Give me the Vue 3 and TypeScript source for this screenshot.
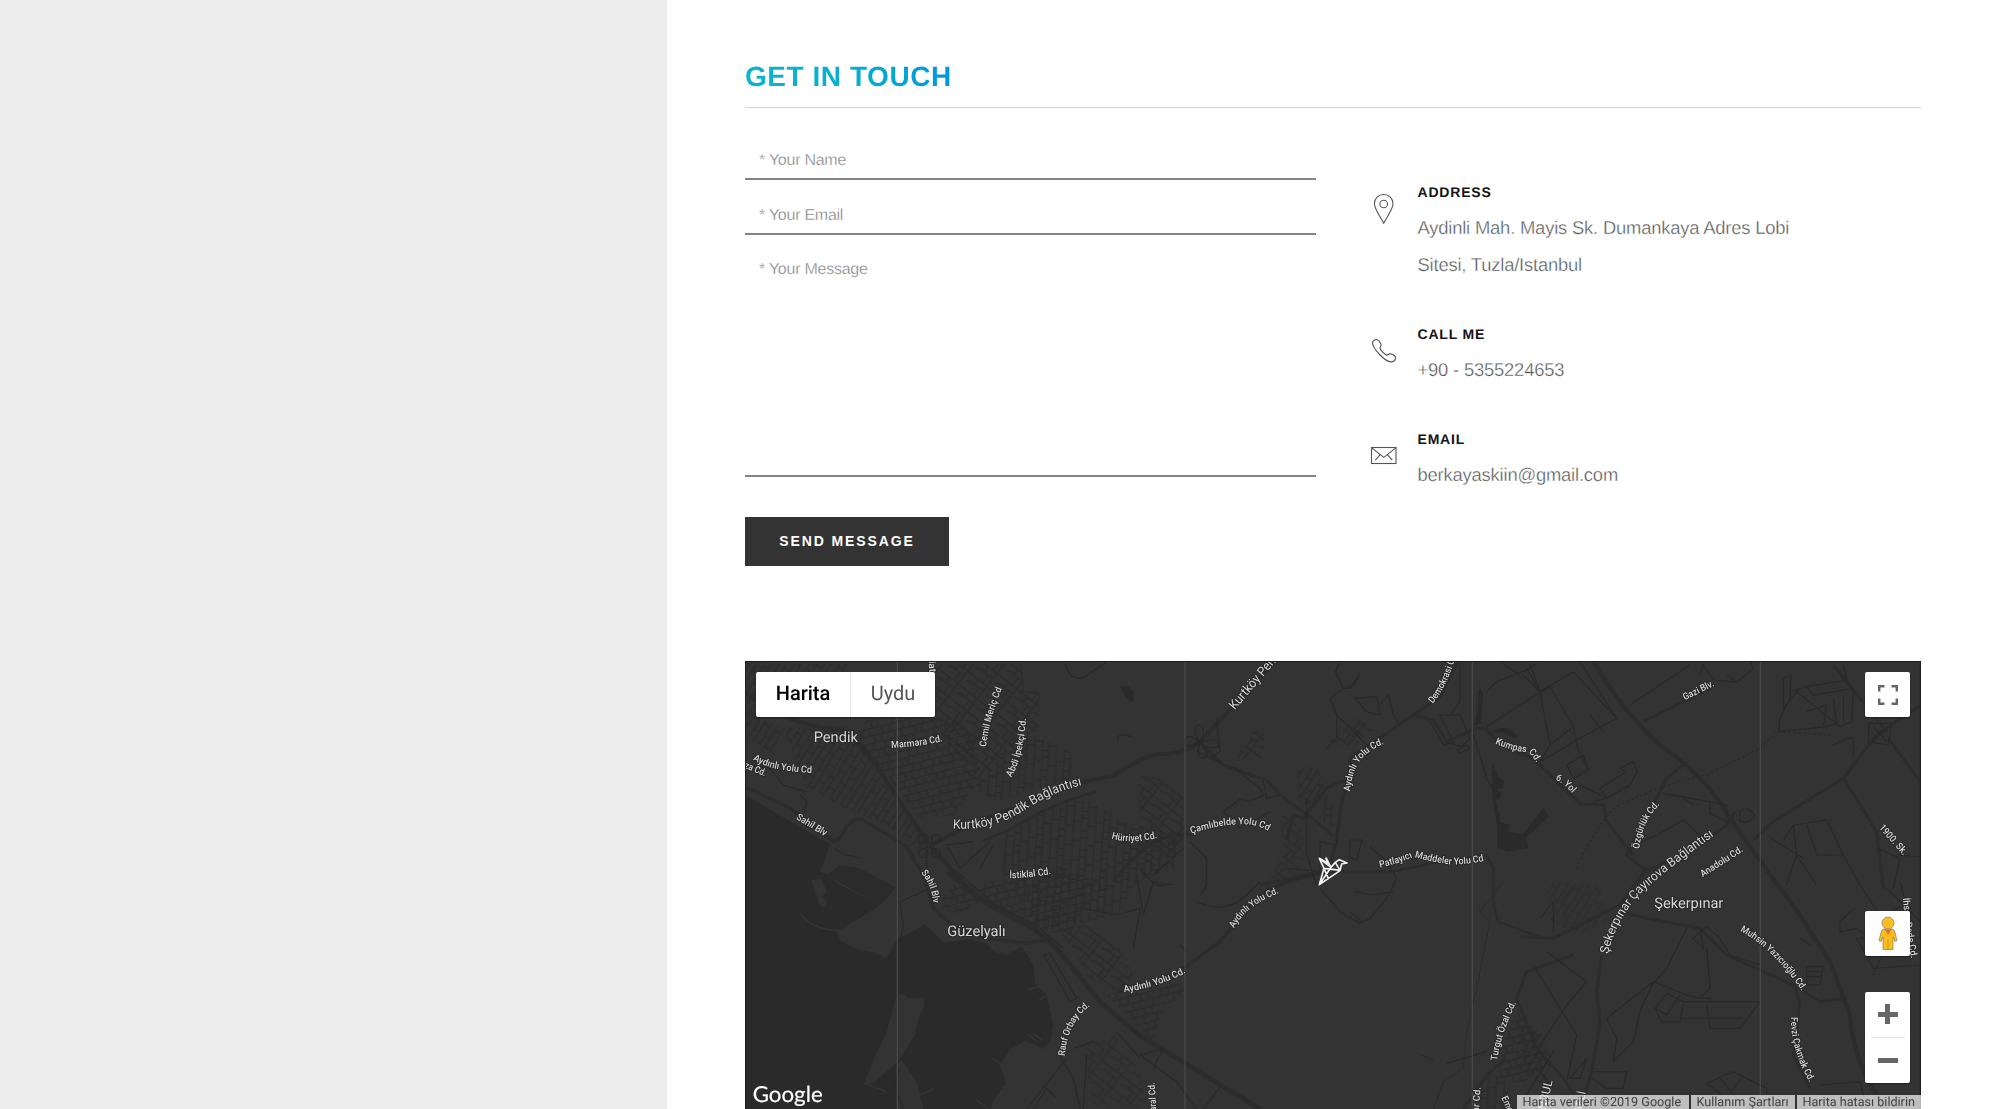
<script setup lang="ts">
interface Label {
  id: string
  text: string
  d: string
  size?: number
  length?: number
}

interface Contact {
  icon: 'pin' | 'phone' | 'mail'
  title: string
  lines: string[]
}

const contacts: Contact[] = [
  { icon: 'pin', title: 'ADDRESS', lines: ['Aydinli Mah. Mayis Sk. Dumankaya Adres Lobi', 'Sitesi, Tuzla/Istanbul'] },
  { icon: 'phone', title: 'CALL ME', lines: ['+90 - 5355224653'] },
  { icon: 'mail', title: 'EMAIL', lines: ['berkayaskiin@gmail.com'] },
]

// Vertical joins between the map tiles
const seams = [472, 1335, 2197, 3061]

// Street names that follow their roads
const labels: Label[] = [
  { id: 'lat', text: 'lat', d: 'M566 18 L569 64', length: 34 },
  { id: 'marmara', text: 'Marmara Cd.', d: 'M454 279 Q530 276 612 258', length: 156 },
  { id: 'cemil', text: 'Cemil Meriç Cd', d: 'M738 276 Q748 190 788 96', length: 182 },
  { id: 'abdi', text: 'Abdi İpekçi Cd.', d: 'M814 367 Q852 300 858 188', length: 184 },
  { id: 'aydinli1', text: 'Aydınlı Yolu Cd', d: 'M38 314 Q84 340 132 345 Q180 354 226 354', length: 184 },
  { id: 'za', text: 'za Cd.', d: 'M12 338 L84 368', length: 68 },
  { id: 'sahil1', text: 'Sahil Blv', d: 'M167 491 L258 546', length: 102 },
  { id: 'sahil2', text: 'Sahil Blv', d: 'M543 653 Q575 690 579 742', length: 100 },
  { id: 'kurtkoy1', text: 'Kurtköy Pendik Bağlantısı', d: 'M638 520 Q750 530 850 468 Q930 412 1036 388', size: 39, length: 416 },
  { id: 'hurriyet', text: 'Hürriyet Cd.', d: 'M1114 550 Q1170 568 1256 548', length: 140 },
  { id: 'istiklal', text: 'İstiklal Cd.', d: 'M809 670 Q860 670 938 656', length: 126 },
  { id: 'rauf', text: 'Rauf Orbay Cd.', d: 'M974 1203 Q984 1100 1050 1054', length: 174 },
  { id: 'kurtkoy2', text: 'Kurtköy Pendik', d: 'M1484 166 L1674 -58', size: 39, length: 240 },
  { id: 'demokrasi', text: 'Demokrasi Cd', d: 'M2078 146 Q2124 94 2154 -20', length: 162 },
  { id: 'kumpas', text: 'Kumpas Cd.', d: 'M2265 265 Q2320 290 2364 292 Q2378 298 2394 334', length: 144 },
  { id: 'aydinli2', text: 'Aydınlı Yolu Cd.', d: 'M1830 410 Q1838 335 1872 304 Q1900 278 1930 268', length: 188 },
  { id: 'camlibelde', text: 'Çamlıbelde Yolu Cd', d: 'M1354 536 Q1450 504 1520 508 Q1560 512 1588 530', length: 238 },
  { id: 'patlayici', text: 'Patlayıcı Maddeler Yolu Cd', d: 'M1920 638 Q1980 624 2020 606 Q2080 622 2130 628 Q2180 630 2242 616', length: 320 },
  { id: 'aydinli3', text: 'Aydınlı Yolu Cd.', d: 'M1482 820 Q1520 750 1618 714', length: 176 },
  { id: 'aydinli4', text: 'Aydınlı Yolu Cd.', d: 'M1152 1012 Q1250 998 1336 954', length: 196 },
  { id: 'maral', text: 'Maral Cd.', d: 'M1250 1390 L1244 1278', length: 108 },
  { id: 'turgut', text: 'Turgut Özal Cd.', d: 'M2272 1217 Q2278 1150 2330 1040', length: 184 },
  { id: 'arcd', text: 'lar Cd.', d: 'M2216 1380 L2222 1292', length: 84 },
  { id: 'em', text: 'Emek', d: 'M2284 1328 L2310 1388', length: 62 },
  { id: 'gazi', text: 'Gazi Blv.', d: 'M2834 136 L2928 90', length: 100 },
  { id: 'yol', text: '6. Yol', d: 'M2446 374 Q2470 384 2498 416', length: 66 },
  { id: 'ozgurluk', text: 'Özgürlük Cd.', d: 'M2698 582 Q2706 500 2758 450', length: 150 },
  { id: 'cayirova', text: 'Şekerpınar Çayırova Bağlantısı', d: 'M2604 898 Q2630 790 2706 710 Q2800 628 2928 538', size: 38, length: 490 },
  { id: 'anadolu', text: 'Anadolu Cd.', d: 'M2888 667 L3014 586', length: 146 },
  { id: 'sk1900', text: '1900. Sk.', d: 'M3416 518 L3494 606', length: 112 },
  { id: 'muhsin', text: 'Muhsin Yazıcıoğlu Cd.', d: 'M3000 828 Q3100 880 3188 1012', length: 262 },
  { id: 'fevzi', text: 'Fevzi Çakmak Cd.', d: 'M3153 1086 Q3150 1180 3212 1288', length: 206 },
  { id: 'ihsan', text: 'İhsan Dede Cd.', d: 'M3488 730 Q3496 820 3514 914', length: 182 },
  { id: 'bul', text: 'İSTANBUL', d: 'M2402 1440 L2438 1276', size: 36, length: 166 },
  { id: 'koc', text: 'KOCAELİ', d: 'M2510 1438 L2538 1310', size: 32, length: 130 },
]
</script>

<template>
  <div class="page">
    <aside class="side"></aside>
    <main class="main">
      <h2 class="heading"><span>GET IN TOUCH</span></h2>

      <section class="touch">
        <form class="form" @submit.prevent>
          <label class="field"><span>* Your Name</span></label>
          <label class="field second"><span>* Your Email</span></label>
          <label class="field area"><span>* Your Message</span></label>
          <button class="send" type="submit">SEND MESSAGE</button>
        </form>

        <ul class="contacts">
          <li v-for="c in contacts" :key="c.title">
            <svg class="icon" :class="c.icon" width="30" height="34" viewBox="0 0 30 34" fill="none" stroke="#555" stroke-width="1.1">
              <template v-if="c.icon === 'pin'">
                <path d="M14.7 33.2C12 27.5 5.4 19.6 5.4 13.6C5.4 8.2 9.5 4.5 14.7 4.5S24 8.2 24 13.6C24 19.6 17.400 27.500 14.700 33.200Z" />
                <circle cx="14.700" cy="14" r="3.800" />
              </template>
              <path
                v-else-if="c.icon === 'phone'"
                d="M5.200 7.300C6.600 6.200 8.500 6.300 9.900 7.900C11.400 9.800 12.700 11.300 11.900 12.900C10.900 14.300 10.700 15 11.500 16.400C12.700 18.600 15.200 20.800 17.700 22.300C19.300 21.200 20.800 20.500 22.500 21.100C24.500 21.700 26.500 23.500 26.500 25.100C26.400 27 24.600 28.500 22.500 28.900C19.500 29.200 14.500 25.600 10.600 21.500C6.500 17.200 3.600 13 3.500 10.100C3.500 8.900 4.200 8 5.200 7.300Z"
              />
              <template v-else>
                <rect x="2.500" y="8.500" width="24.500" height="16" />
                <path d="M2.500 8.600L14.800 18.400L27.100 8.600M11.200 15.600L6.400 21.200M18.400 15.600L23.200 21.200" />
              </template>
            </svg>
            <div>
              <h5>{{ c.title }}</h5>
              <p v-for="line in c.lines" :key="line">{{ line }}</p>
            </div>
          </li>
        </ul>
      </section>

      <section class="map">
        <svg class="canvas" viewBox="15 18 3528 1344" preserveAspectRatio="none">
          <defs>
            <pattern id="ga" width="62" height="44" patternUnits="userSpaceOnUse" patternTransform="rotate(-14)">
              <path d="M0 1H62M0 23H62M12 1V23M42 23V45M50 1V23M22 23V45" class="grid" />
            </pattern>
            <pattern id="gb" width="74" height="48" patternUnits="userSpaceOnUse" patternTransform="rotate(38)">
              <path d="M0 1H74M0 20H50M18 1V20M50 1V48M34 20V48M62 24H74" class="grid" />
            </pattern>
            <pattern id="gc" width="66" height="58" patternUnits="userSpaceOnUse" patternTransform="rotate(4)">
              <path d="M1 0V58M20 0V58M44 0V58M1 10H20M20 34H44M44 20H66M1 48H20" class="grid" />
            </pattern>
            <pattern id="gd" width="58" height="38" patternUnits="userSpaceOnUse" patternTransform="rotate(-58)">
              <path d="M0 1H58M0 18H58M10 1V18M38 18V38" class="grid" />
            </pattern>
          </defs>

          <rect x="15" y="18" width="3528" height="1344" fill="#333" />

          <!-- sea, lakes and quarries -->
          <g fill="#2a2a2a">
            <path d="M15 420L270 568L240 650L262 660L300 690L420 750L330 810L292 828L300 856L350 885L402 890L430 908L450 890L472 850L505 838L535 820L556 808L610 864L690 852L740 866L765 892L800 898L846 874L880 930L885 985L920 1020L940 1110L930 1160L910 1182L856 1156L812 1182L780 1230L798 1285L764 1330L750 1362H550L530 1280L480 1210L470 1160L400 1285L370 1290L412 1190L440 1120L470 1015H552L538 1100L520 1180L470 1230V1362H15Z" />
            <path d="M1140 92L1166 94L1182 110L1178 142L1160 130Z" />
            <path d="M2220 98L2230 118L2222 206L2202 212L2214 160L2212 112Z" />
            <path d="M2250 232Q2300 200 2334 246L2320 250L2290 232Z" />
            <path d="M2256 326L2280 372L2294 378L2286 400L2266 404L2284 410L2280 432L2266 434L2278 480L2280 502L2310 510L2304 530L2350 536L2410 460L2426 484L2358 550L2366 580L2300 590L2272 576L2272 520L2258 430Z" />
          </g>
          <path d="M240 650L262 658L300 632L360 640L470 700L420 750L330 700Z" fill="#2b2b2b" />
          <path d="M290 830L420 755L472 690V850L440 910L400 892L350 885L305 858Z" fill="#333" />
          <g fill="#333">
            <path d="M214 676L244 672L262 712L244 726L262 740L252 760L240 752L228 716Z" />
            <path d="M472 1015L496 1020L500 1028H552V1058L538 1080L525 1140L472 1222L390 1290L372 1288L398 1220L440 1130Z" />
            <path d="M472 1220L520 1270L545 1362H472Z" />
          </g>
          <path d="M182 776Q210 824 300 826" class="pier" />
          <path d="M280 580L312 598L362 610" class="thin" />
          <path d="M864 1004L904 992M896 1036L916 1024M862 1138L890 1158M880 1136L908 1156M754 1206L796 1240M706 1332L746 1362M372 1284L440 1310M540 1320L582 1300" class="pier" />

          <!-- built-up street grids -->
          <g opacity=".8">
            <path d="M20 26H330L328 52H50V186L130 220L100 300L20 240Z" fill="url(#gd)" />
            <path d="M590 30L840 24L852 90L900 120L900 200L860 290L700 380L585 190Z" fill="url(#gb)" />
            <path d="M370 190H640L720 250L700 400L640 480L540 492L470 400L350 280Z" fill="url(#ga)" />
            <path d="M130 220L330 210L390 310L470 440L560 540L540 590L440 510L340 470L200 400Z" fill="url(#gd)" />
            <path d="M840 220L990 290L1000 370L770 440L700 400Z" fill="url(#gc)" />
            <path d="M800 530L960 440L1050 440L1150 500L1320 540L1300 640L1180 690L1130 780L900 830L780 640Z" fill="url(#gc)" />
            <path d="M640 690L700 690L980 640L1110 700L1020 770L990 840L930 830L730 740L640 780L600 740Z" fill="url(#ga)" />
            <path d="M960 830L1040 810L1130 870L1180 960L1140 1010L1050 970Z" fill="url(#gb)" />
            <path d="M1200 350L1300 390L1330 430V560L1240 640L1200 640Z" fill="url(#gb)" />
            <path d="M1100 1020L1300 970L1340 1010L1270 1060L1240 1160L1200 1120Z" fill="url(#ga)" />
            <path d="M2300 1140L2340 1060L2390 1140L2420 1230L2340 1290L2270 1270Z" fill="url(#ga)" />
            <path d="M2240 1240L2310 1290L2300 1362H2200Z" fill="url(#gc)" />
            <path d="M2420 680L2580 690L2600 800L2520 835L2430 800Z" fill="url(#gd)" opacity=".6" />
            <path d="M1500 290L1545 225L1575 240L1570 310L1490 318Z" fill="url(#gb)" />
            <path d="M1670 340L1730 336L1754 380L1740 440L1680 450Z" fill="url(#gd)" />
            <path d="M1740 390L1785 460L1790 520L1740 500Z" fill="url(#gc)" />
            <path d="M1620 480L1680 500L1700 600L1640 690L1570 700L1630 600Z" fill="url(#gb)" opacity=".6" />
            <path d="M1750 270L1850 190L1906 220L1850 270Z" fill="url(#gb)" />
            <path d="M1020 1170L1120 1140L1200 1250L1220 1362L1060 1350Z" fill="url(#gb)" opacity=".7" />
            <path d="M2340 1080L2400 1130L2440 1220L2400 1290L2340 1240Z" fill="url(#gd)" />
          </g>

          <!-- motorways and avenues -->
          <g class="road">
            <path d="M15 112Q120 205 300 225Q370 260 440 380L570 572L720 740" stroke-width="12" />
            <path d="M15 395L150 460L280 560Q300 556 320 515Q345 485 370 495L500 575L550 660L580 760L640 815L740 850L860 865L940 850" stroke-width="10" />
            <path d="M570 572Q700 500 850 450Q1000 380 1120 362Q1200 310 1250 297Q1330 300 1380 260L1470 165L1600 25" stroke-width="12" />
            <path d="M620 650L740 745L880 820L950 880L1080 1040L1200 1142L1560 1362" stroke-width="14" />
            <path d="M650 650L760 745L890 812L970 880" stroke-width="5" />
            <path d="M730 556Q780 540 850 500Q930 450 1070 410" stroke-width="7" />
            <path d="M1120 680Q1240 520 1354 540M1380 262L1450 330L1580 376L1620 420L1730 500L1780 545" stroke-width="9" />
            <path d="M1640 555L1660 480L1690 490L1760 400L1800 380H1820L1800 470Q1790 590 1760 650L1640 680L1560 720L1440 860L1320 948L1200 1000L1130 1010" stroke-width="10" />
            <path d="M1820 410L1830 310L2020 180L2100 125L2156 15M2020 180L2080 196L2120 260L2210 220L2240 222L2280 270L2380 310L2440 370L2520 446L2590 450L2600 500L2640 550L2680 600" stroke-width="9" />
            <path d="M2240 215L2340 150L2430 95L2500 215L2515 285L2545 345" stroke-width="5" />
            <path d="M2560 20Q2640 160 2760 270Q2890 360 2950 460L3040 590L3180 780L3270 920L3330 1080Q3340 1230 3440 1362" stroke-width="12" />
            <path d="M2710 200L2910 100M2840 320L2780 370L2730 470L2660 600L2720 650L2880 570L2960 510L2985 470" stroke-width="9" />
            <path d="M3040 555L3100 500L3310 370L3410 240L3543 150M3310 370L3410 530L3430 700M3445 250L3540 380M3280 30L3440 230" stroke-width="9" />
            <path d="M2340 845L2440 850L2640 750L2720 640M2585 900L2570 1010L2580 1100L2555 1250L2520 1362" stroke-width="9" />
            <path d="M2640 770L2720 790L2880 820L2960 900L3160 990L3240 1040L3320 1030M3160 990L3180 1040L3160 1200L3210 1300" stroke-width="8" />
            <path d="M2300 1210L2240 1260L2170 1362M2500 900L2360 950L2330 1030L2390 1180L2470 1270L2530 1362" stroke-width="8" />
            <path d="M1960 650L2100 620L2240 600L2260 640V740L2274 800L2410 850M1560 690L1740 650L1960 650" stroke-width="7" />
            <path d="M980 1210L860 1362M960 1205L1000 1270L1020 1362M560 565L560 650L590 740" stroke-width="6" />
            <path d="M840 20L850 110L900 115M2290 680L2220 770L2250 800L2210 1000L2180 1130L2170 1240L2110 1280L2080 1362" stroke-width="3" />
          </g>

          <!-- minor streets -->
          <g class="thin">
            <path d="M975 25Q990 80 1030 68L1100 20M700 560L620 570L660 640L750 560M760 570L720 640" />
            <path d="M480 860L490 810L480 740L570 700M180 420L200 440L190 480L150 460M20 330L90 340L130 390L200 410" />
            <path d="M1030 760L1130 780L1200 760L1180 880M912 900L990 1040L1010 1030L930 895Z" />
            <path d="M1133 256Q1130 230 1175 245M1380 260Q1350 225 1375 210Q1400 215 1385 262Q1440 240 1436 275Q1400 285 1380 262Q1410 290 1395 308Q1365 312 1380 262Q1330 285 1335 255Q1340 230 1380 262" />
            <path d="M1430 190L1440 290L1410 310M1450 470L1500 432L1530 440L1570 420L1560 400L1490 345L1370 290M1450 470L1500 520L1590 470" />
            <path d="M1800 20L1786 50L1810 100L1840 94L1860 56L1830 100L1810 100L1770 130L1790 180V250L1760 280M1790 180L1880 270M1845 130L1910 125L1920 180L1880 170ZM1920 150L1945 120L1960 180L1980 210" />
            <path d="M1570 376L1580 430L1620 420M1700 430V600L1730 690M1640 640L1740 650L1740 560L1790 570V520M1830 555H1866L1850 615L1828 605ZM1890 575L1940 620L1970 670L1940 730L1890 790L1860 805L1800 770L1740 700M1840 710L1900 720L1960 710M1830 770L1870 805" />
            <path d="M2070 200L2110 270L2140 262L2100 180L2160 180L2190 250L2165 275L2120 262M2160 20L2160 140L2130 180M2150 285L2180 270L2190 280L2160 295Z" />
            <path d="M2200 235L2240 370L2270 420M2350 60L2400 110L2370 30M2240 110L2270 80L2360 45L2390 25M2120 1225L2240 1190M2045 1200L2080 1215" />
            <path d="M2360 40L2400 110L2500 50L2630 190L2520 250L2400 320L2430 270L2400 110M2430 270L2500 215M2550 180L2590 230M2480 330L2530 300L2545 345L2500 370ZM2580 400L2660 350L2640 340L2680 320L2692 350L2670 390L2600 430ZM2520 390L2600 430L2560 440" />
            <path d="M2520 20L2630 190M2670 150L2850 30M2880 60L2890 30L2920 75L2990 82L3040 40L3030 18M2960 60L2990 82M2690 570L2750 540L2830 495L2900 560M2770 415L2960 450L2960 500L2910 475V445M2830 430L2860 450M3000 470Q3020 450 3044 480Q3030 510 3000 498Z" />
            <path d="M3130 70L3153 60L3150 130L3120 190L3115 230L3260 215L3290 205L3300 215L3170 110L3130 160ZM3150 110L3200 95L3220 120L3340 100L3335 200L3300 215M3200 170L3260 150L3250 215M3280 130L3290 205M3310 120V200M3280 270L3320 250H3340V310M3386 205L3455 205L3445 270L3385 260ZM3400 215L3440 260M3440 215L3400 260M3200 95L3320 75L3310 30" />
            <path d="M3130 555L3160 510L3260 495L3310 600L3360 690M3160 510L3170 600L3140 690M3200 510L3230 600L3310 600M3170 600L3230 690M3085 545L3190 610M3470 600L3543 606M3410 580L3480 610L3460 700M3343 760L3300 800V830L3350 820L3390 850H3350L3400 940L3540 930M3360 690L3420 780L3500 750L3480 680M3440 700L3543 800M3430 770V890L3400 960M3180 850L3210 870M3200 935H3250L3240 990H3200ZM3200 950H3245M3200 965H3240" />
            <path d="M2880 820L2890 880L2860 850L2900 815L2940 850L2970 900L3060 930M2900 880L2910 1000L2880 1030L2840 1020L2740 980M2820 1020L2780 1080L2745 1060L2780 1015L2830 1040L2820 1100H2765L2745 1060M2830 1040H3060L3000 1120H2910L2900 1050M2820 1090H3010M2880 1030H2910V1040M2740 980L2600 1090L2630 1150L2620 1220L2680 1160L2700 1070L2740 980M2840 820L2780 940L2740 985" />
            <path d="M2420 890L2540 980L2480 1050L2400 1170M2380 930L2510 1140L2480 1280M2490 1270L2540 1210L2520 1270ZM2560 1250H2660L2650 1300H2600L2550 1265M2900 1285L2980 1250L3080 1300V1330L3020 1362M2940 1270L3020 1362M3010 1260L2960 1330M2900 1285L2960 1330M3240 1290L3360 1280L3380 1362M2340 1350L2440 1190M2400 1250L2440 1300" />
            <path d="M1200 1200L1270 1180L1240 1240M1440 1295L1390 1362M1200 1200L1310 1280L1370 1362M2400 790L2440 740L2440 830M1320 870L1340 890M1190 660L1210 780L1240 680L1300 690" />
            <path d="M1370 740Q1460 780 1520 720L1560 680M1350 560L1400 610L1400 690L1380 720M1330 580L1240 660M490 1362L460 1290L480 1240M880 1362L920 1300L950 1330M1000 1180L1060 1160M1040 1200L1030 1362M1130 1130L1200 1210M2280 20L2340 60M1200 640Q1240 700 1280 690" />
            <circle cx="550" cy="552" r="14" /><circle cx="588" cy="552" r="14" /><circle cx="550" cy="594" r="14" /><circle cx="588" cy="594" r="14" />
            <path d="M2510 640Q2540 560 2620 460Q2780 380 2900 360L3060 280L3110 230L3280 240" stroke-dasharray="7 8" />
          </g>

          <path v-for="x in seams" :key="x" :d="`M${x} 18V1362`" stroke="#484848" stroke-width="4" />

          <g class="labels">
            <template v-for="l in labels" :key="l.id">
              <path :id="`p-${l.id}`" :d="l.d" fill="none" stroke="none" />
              <text :font-size="l.size ?? 29" :font-weight="l.size ? 400 : 500" :textLength="l.length" lengthAdjust="spacingAndGlyphs">
                <textPath :href="`#p-${l.id}`">{{ l.text }}</textPath>
              </text>
            </template>
            <text x="221" y="262" font-size="44" textLength="133">Pendik</text>
            <text x="622" y="843" font-size="44" textLength="175">Güzelyalı</text>
            <text x="2743" y="759" font-size="44" textLength="207">Şekerpınar</text>
          </g>

          <!-- origami bird marker -->
          <path
            transform="translate(1720 592)"
            d="M18 18L32 48L18 97L80 55L85 35L101 32L78 22L66 30L53 45L38 17L42 32L18 18L53 45M32 48L82 54M32 48L45 78M53 45L20 94M66 30L80 54"
            fill="none"
            stroke="#f2f2f2"
            stroke-width="5"
            stroke-linejoin="round"
          />
          <text x="38" y="1341" class="google" textLength="210" lengthAdjust="spacingAndGlyphs">Google</text>
          <path d="M16.500 18V1362M3541 18V1362M15 19.500H3543" stroke="#1c1c1c" stroke-width="3" />
        </svg>

        <div class="types"><b>Harita</b><span>Uydu</span></div>
        <div class="control full">
          <svg width="20" height="20" viewBox="0 0 20 20" fill="none" stroke="#666" stroke-width="2.400">
            <path d="M1.200 6.500V1.200H6.500M13.500 1.200H18.800V6.500M18.800 13.500V18.800H13.500M6.500 18.800H1.200V13.500" />
          </svg>
        </div>
        <div class="control peg">
          <svg width="20" height="35" viewBox="0 0 20 35">
            <path d="M5.200 13H14.800L16.500 15L19 24.500L16.800 25.500L15 21V33.500H5V21L3.200 25.500L1 24.500L3.500 15Z" fill="#fbbc1e" stroke="#8c8773" stroke-width=".8" />
            <path d="M10 24V33.500" stroke="#b58a2a" stroke-width=".8" />
            <circle cx="10" cy="7" r="6" fill="#fbbc1e" stroke="#8c8773" stroke-width=".8" />
            <path d="M6 12.800Q10 14.500 14 12.800L10.200 18.500Z" fill="#e8702a" />
          </svg>
        </div>
        <div class="control zoom"><i class="plus"></i><hr /><i></i></div>
        <div class="terms">
          <span class="t1">Harita verileri ©2019 Google</span>
          <span class="t2">Kullanım Şartları</span>
          <span class="t3">Harita hatası bildirin</span>
        </div>
      </section>
    </main>
  </div>
</template>

<style>
body {
  margin: 0;
  overflow: hidden;
}
</style>

<style scoped>
.page {
  display: flex;
  width: 2000px;
  height: 1109px;
  overflow: hidden;
  background: #fff;
  font-family: 'Liberation Sans', Arial, sans-serif;
  text-rendering: geometricPrecision;
}
.side {
  flex: 0 0 666.5px;
  background: #ededed;
}
.main {
  display: flex;
  flex-direction: column;
  width: 1176px;
  margin-left: 78.500px;
}
.heading {
  box-sizing: border-box;
  flex: none;
  height: 108px;
  margin: 0;
  padding-top: 61px;
  border-bottom: 1px solid #d2d2d2;
  font-size: 28px;
  line-height: 31px;
  letter-spacing: 0.550px;
}
.heading span {
  background: linear-gradient(90deg, #0fb2d0 0%, #06b0d0 50%, #0098dc 100%);
  background-clip: text;
  color: transparent;
}
.touch {
  display: flex;
  flex: none;
  height: 553px;
}
.form {
  display: flex;
  flex-direction: column;
  align-items: flex-start;
  width: 571px;
}
.field {
  box-sizing: border-box;
  width: 571px;
  height: 72px;
  padding: 43px 14px 0;
  border-bottom: 2px solid #858585;
  color: #808080;
  font-size: 16px;
  line-height: 20px;
  letter-spacing: -0.250px;
  -webkit-text-stroke: 0.300px #fff;
}
.second {
  height: 55px;
  padding-top: 26px;
}
.area {
  height: 242px;
  padding-top: 24.500px;
}
.send {
  width: 204px;
  height: 49px;
  margin-top: 39.500px;
  padding: 0;
  border: 0;
  background: #333;
  color: #fff;
  font: bold 14px/46px 'Liberation Sans', Arial, sans-serif;
  letter-spacing: 1.900px;
}
.contacts {
  display: flex;
  flex-direction: column;
  gap: 39.500px;
  margin: 0;
  padding: 73px 0 0 53px;
  list-style: none;
}
.contacts li {
  display: flex;
}
.icon {
  margin: 9px 18.500px 0 0;
}
.icon.phone {
  margin-top: 10px;
}
.icon.mail {
  margin-top: 11px;
}
h5 {
  margin: 0 0 7px;
  color: #151515;
  font-size: 14px;
  line-height: 22px;
  letter-spacing: 0.800px;
}
p {
  margin: 0;
  color: #545454;
  font-size: 18.400px;
  line-height: 36.500px;
  letter-spacing: -0.190px;
  -webkit-text-stroke: 0.350px #fff;
}
.map {
  position: relative;
  flex: none;
  height: 448px;
  overflow: hidden;
  font-family: Roboto, sans-serif;
}
.canvas {
  display: block;
  width: 1176px;
  height: 448px;
}
.grid {
  fill: none;
  stroke: #282828;
  stroke-width: 3;
}
.road {
  fill: none;
  stroke: #2c2c2c;
  stroke-linejoin: round;
}
.pier {
  fill: none;
  stroke: #363636;
  stroke-width: 4;
}
.thin {
  fill: none;
  stroke: #292929;
  stroke-width: 3.500;
}
.labels {
  fill: #d8d8d8;
  stroke: #242424;
  stroke-width: 5;
  stroke-linejoin: round;
  paint-order: stroke;
}
.google {
  fill: #fff;
  stroke: #fff;
  stroke-width: 0.500;
  font: 400 66px Lato, sans-serif;
}
.types {
  position: absolute;
  top: 11px;
  left: 11px;
  display: flex;
  width: 179px;
  height: 45px;
  border-radius: 2px;
  background: #fff;
  box-shadow: 0 1px 2px rgba(0, 0, 0, 0.4);
  font-size: 20px;
  line-height: 43px;
  text-align: center;
}
.types b {
  flex: 0 0 95px;
  box-sizing: border-box;
  border-right: 1px solid #e8e8e8;
  color: #000;
  font-weight: 500;
}
.types span {
  flex: 1;
  color: #565656;
}
.control {
  position: absolute;
  right: 11px;
  display: flex;
  flex-direction: column;
  align-items: center;
  justify-content: center;
  width: 45px;
  height: 45px;
  border-radius: 2px;
  background: #fff;
  box-shadow: 0 1px 2px rgba(0, 0, 0, 0.4);
}
.full {
  top: 11px;
}
.peg {
  top: 250px;
}
.control.zoom {
  top: 331px;
  justify-content: flex-start;
  height: 91px;
}
.zoom hr {
  width: 34px;
  height: 1px;
  margin: 13px 0 20px;
  border: 0;
  background: #e3e3e3;
}
.zoom i {
  display: block;
  width: 20px;
  height: 5px;
  background: #666;
}
.zoom .plus {
  height: 20px;
  margin-top: 12px;
  background: linear-gradient(#666, #666) center / 20px 5px no-repeat, linear-gradient(#666, #666) center / 5px 20px no-repeat;
}
.terms {
  position: absolute;
  right: 0;
  bottom: 0;
  display: flex;
  width: 404px;
  height: 14px;
  color: #3d3d3d;
  font-size: 12.600px;
  line-height: 15px;
  white-space: nowrap;
}
.terms span {
  box-sizing: border-box;
  padding-left: 5.500px;
  background: rgba(245, 245, 245, 0.72);
}
.t1 {
  width: 172px;
}
.t2 {
  width: 104px;
  margin-left: 2px;
}
.t3 {
  width: 124px;
  margin-left: 2px;
}
</style>
